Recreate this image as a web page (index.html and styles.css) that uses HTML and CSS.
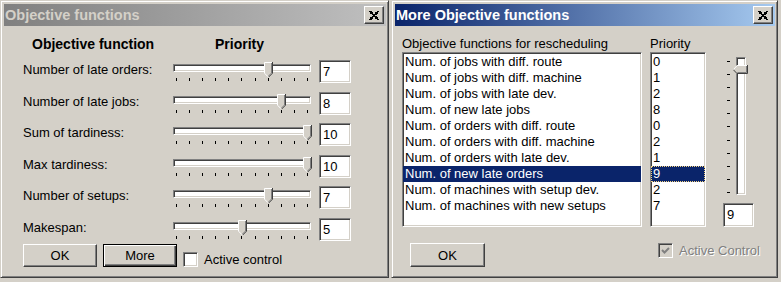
FILE: index.html
```html
<!DOCTYPE html>
<html>
<head>
<meta charset="utf-8">
<link rel="stylesheet" href="styles.css">
</head>
<body>
<div class="desk">
  <div class="window win-left">
    <div class="titlebar inactive">
      <span class="title-text">Objective functions</span>
      <span class="close raised"><svg width="10" height="9" viewBox="0 0 8 7" shape-rendering="crispEdges"><path d="M0 0h2v1H0zM6 0h2v1H6zM1 1h2v1H1zM5 1h2v1H5zM2 2h4v1H2zM3 3h2v1H3zM2 4h4v1H2zM1 5h2v1H1zM5 5h2v1H5zM0 6h2v1H0zM6 6h2v1H6z" fill="#000"/></svg></span>
    </div>
    <div class="obj-body">
      <div class="obj-head">
        <span class="head-fn">Objective function</span>
        <span class="head-prio">Priority</span>
      </div>
      <div class="row">
        <span class="label">Number of late orders:</span>
        <div class="hslider"><div class="track sunken"></div><div class="ticks"><i></i><i></i><i></i><i></i><i></i><i></i><i></i><i></i><i></i><i></i><i></i></div><svg class="hthumb" style="left:91px" width="9" height="15" viewBox="0 0 9 15"><path d="M0 0H9V11L4.5 15.5L0 11Z" fill="#d4d0c8"/><path d="M0.5 11V0.5H8" stroke="#fff" fill="none"/><path d="M8.5 0V11.2L4.5 15.2" stroke="#404040" fill="none"/><path d="M7.5 1V11L4.5 14" stroke="#808080" fill="none"/><path d="M0.5 11.2L4 14.7" stroke="#fff" fill="none"/></svg></div>
        <span class="edit sunken">7</span>
      </div>
      <div class="row">
        <span class="label">Number of late jobs:</span>
        <div class="hslider"><div class="track sunken"></div><div class="ticks"><i></i><i></i><i></i><i></i><i></i><i></i><i></i><i></i><i></i><i></i><i></i></div><svg class="hthumb" style="left:104px" width="9" height="15" viewBox="0 0 9 15"><path d="M0 0H9V11L4.5 15.5L0 11Z" fill="#d4d0c8"/><path d="M0.5 11V0.5H8" stroke="#fff" fill="none"/><path d="M8.5 0V11.2L4.5 15.2" stroke="#404040" fill="none"/><path d="M7.5 1V11L4.5 14" stroke="#808080" fill="none"/><path d="M0.5 11.2L4 14.7" stroke="#fff" fill="none"/></svg></div>
        <span class="edit sunken">8</span>
      </div>
      <div class="row">
        <span class="label">Sum of tardiness:</span>
        <div class="hslider"><div class="track sunken"></div><div class="ticks"><i></i><i></i><i></i><i></i><i></i><i></i><i></i><i></i><i></i><i></i><i></i></div><svg class="hthumb" style="left:130px" width="9" height="15" viewBox="0 0 9 15"><path d="M0 0H9V11L4.5 15.5L0 11Z" fill="#d4d0c8"/><path d="M0.5 11V0.5H8" stroke="#fff" fill="none"/><path d="M8.5 0V11.2L4.5 15.2" stroke="#404040" fill="none"/><path d="M7.5 1V11L4.5 14" stroke="#808080" fill="none"/><path d="M0.5 11.2L4 14.7" stroke="#fff" fill="none"/></svg></div>
        <span class="edit sunken">10</span>
      </div>
      <div class="row">
        <span class="label">Max tardiness:</span>
        <div class="hslider"><div class="track sunken"></div><div class="ticks"><i></i><i></i><i></i><i></i><i></i><i></i><i></i><i></i><i></i><i></i><i></i></div><svg class="hthumb" style="left:130px" width="9" height="15" viewBox="0 0 9 15"><path d="M0 0H9V11L4.5 15.5L0 11Z" fill="#d4d0c8"/><path d="M0.5 11V0.5H8" stroke="#fff" fill="none"/><path d="M8.5 0V11.2L4.5 15.2" stroke="#404040" fill="none"/><path d="M7.5 1V11L4.5 14" stroke="#808080" fill="none"/><path d="M0.5 11.2L4 14.7" stroke="#fff" fill="none"/></svg></div>
        <span class="edit sunken">10</span>
      </div>
      <div class="row">
        <span class="label">Number of setups:</span>
        <div class="hslider"><div class="track sunken"></div><div class="ticks"><i></i><i></i><i></i><i></i><i></i><i></i><i></i><i></i><i></i><i></i><i></i></div><svg class="hthumb" style="left:91px" width="9" height="15" viewBox="0 0 9 15"><path d="M0 0H9V11L4.5 15.5L0 11Z" fill="#d4d0c8"/><path d="M0.5 11V0.5H8" stroke="#fff" fill="none"/><path d="M8.5 0V11.2L4.5 15.2" stroke="#404040" fill="none"/><path d="M7.5 1V11L4.5 14" stroke="#808080" fill="none"/><path d="M0.5 11.2L4 14.7" stroke="#fff" fill="none"/></svg></div>
        <span class="edit sunken">7</span>
      </div>
      <div class="row last">
        <span class="label">Makespan:</span>
        <div class="hslider"><div class="track sunken"></div><div class="ticks"><i></i><i></i><i></i><i></i><i></i><i></i><i></i><i></i><i></i><i></i><i></i></div><svg class="hthumb" style="left:65px" width="9" height="15" viewBox="0 0 9 15"><path d="M0 0H9V11L4.5 15.5L0 11Z" fill="#d4d0c8"/><path d="M0.5 11V0.5H8" stroke="#fff" fill="none"/><path d="M8.5 0V11.2L4.5 15.2" stroke="#404040" fill="none"/><path d="M7.5 1V11L4.5 14" stroke="#808080" fill="none"/><path d="M0.5 11.2L4 14.7" stroke="#fff" fill="none"/></svg></div>
        <span class="edit sunken">5</span>
      </div>
      <div class="btn-row">
        <span class="btn raised">OK</span>
        <span class="btn default">More</span>
        <span class="check sunken white"></span>
        <span class="check-label">Active control</span>
      </div>
    </div>
  </div>

  <div class="window win-right">
    <div class="titlebar active">
      <span class="title-text">More Objective functions</span>
      <span class="close raised"><svg width="10" height="9" viewBox="0 0 8 7" shape-rendering="crispEdges"><path d="M0 0h2v1H0zM6 0h2v1H6zM1 1h2v1H1zM5 1h2v1H5zM2 2h4v1H2zM3 3h2v1H3zM2 4h4v1H2zM1 5h2v1H1zM5 5h2v1H5zM0 6h2v1H0zM6 6h2v1H6z" fill="#000"/></svg></span>
    </div>
    <div class="more-body">
      <div class="more-grid">
        <span class="col-label">Objective functions for rescheduling</span>
        <span class="col-label">Priority</span>
        <span></span>
        <ul class="listbox sunken fn-list">
          <li>Num. of jobs with diff. route</li>
          <li>Num. of jobs with diff. machine</li>
          <li>Num. of jobs with late dev.</li>
          <li>Num. of new late jobs</li>
          <li>Num. of orders with diff. route</li>
          <li>Num. of orders with diff. machine</li>
          <li>Num. of orders with late dev.</li>
          <li class="sel">Num. of new late orders</li>
          <li>Num. of machines with setup dev.</li>
          <li>Num. of machines with new setups</li>
        </ul>
        <ul class="listbox sunken prio-list">
          <li>0</li><li>1</li><li>2</li><li>8</li><li>0</li><li>2</li><li>1</li><li class="sel focus">9</li><li>2</li><li>7</li>
        </ul>
        <div class="vcol">
          <div class="vslider">
            <div class="vticks"><i></i><i></i><i></i><i></i><i></i><i></i><i></i><i></i><i></i><i></i><i></i></div>
            <div class="vtrack sunken"></div>
            <svg class="vthumb" style="top:13px" width="15" height="9" viewBox="0 0 15 9"><path d="M4 0H15V9H4L0 4.5Z" fill="#d4d0c8"/><path d="M0.3 4.7L4.2 0.5H14" stroke="#fff" fill="none"/><path d="M14.5 0V8.5H4L0.3 4.7" stroke="#404040" fill="none"/><path d="M13.5 1V7.5H4.4" stroke="#808080" fill="none"/></svg>
          </div>
          <span class="edit sunken vedit">9</span>
        </div>
      </div>
      <div class="more-bottom">
        <span class="btn raised ok-right">OK</span>
        <span class="check sunken disabled"><svg width="11" height="11" viewBox="0 0 11 11"><path d="M2 5L4.5 7.5L9 3" stroke="#808080" stroke-width="2" fill="none"/></svg></span>
        <span class="check-label dim">Active Control</span>
      </div>
    </div>
  </div>
</div>
</body>
</html>
```

FILE: styles.css
```css
* { box-sizing: border-box; }
html, body { margin: 0; padding: 0; }
body {
  background: #d4d0c8;
  font-family: "Liberation Sans", Arial, sans-serif;
  font-size: 13px;
  color: #000;
  width: 781px;
  height: 282px;
  overflow: hidden;
}
.desk { display: flex; align-items: flex-start; gap: 2px; }

.window {
  height: 278px;
  background: #d4d0c8;
  border: 1px solid;
  border-color: #d4d0c8 #404040 #404040 #d4d0c8;
  box-shadow: inset 1px 1px #fff, inset -1px -1px #808080;
  padding: 3px 2px 3px 3px;
}
.win-left { width: 389px; }
.win-right { width: 387px; }

.titlebar {
  height: 22px;
  display: flex;
  align-items: center;
  justify-content: space-between;
  padding: 0 2px 0 1px;
}
.titlebar.inactive { background: linear-gradient(to right, #808080, #c0c0c0); color: #d4d0c8; }
.titlebar.active { background: linear-gradient(to right, #0a246a, #a6caf0); color: #fff; }
.title-text {
  font-family: "Liberation Sans", Arial, sans-serif;
  font-weight: bold;
  font-size: 14.5px;
  line-height: 18px;
}
.close {
  width: 20px;
  height: 18px;
  background: #d4d0c8;
  display: flex;
  align-items: center;
  justify-content: center;
}
.raised {
  border: 1px solid;
  border-color: #fff #404040 #404040 #fff;
  box-shadow: inset -1px -1px #808080;
  background: #d4d0c8;
}
.sunken {
  border: 1px solid;
  border-color: #808080 #fff #fff #808080;
  box-shadow: inset 1px 1px #404040, inset -1px -1px #d4d0c8;
  background: #fff;
}

/* left dialog */
.obj-body { padding: 10px 0 0 19px; }
.obj-head { display: flex; height: 22px; line-height: 16px; font-weight: bold; font-size: 14px; }
.head-fn { width: 150px; padding-left: 9px; }
.head-prio { padding-left: 42px; }
.row { display: flex; align-items: flex-start; height: 31.6px; }
.row.last { height: 28px; }
.label { width: 150px; padding-top: 4px; line-height: 16px; white-space: nowrap; }
.hslider { position: relative; width: 138px; height: 24px; margin-right: 8px; }
.track { position: absolute; left: 0; top: 6px; width: 138px; height: 8px; }
.ticks {
  position: absolute; left: 3px; top: 20px; width: 132px; height: 3px;
  display: flex; justify-content: space-between;
}
.ticks i { display: block; width: 1px; height: 3px; background: #000; }
.hthumb { position: absolute; top: 4px; }
.edit {
  width: 32px; height: 23px; margin-top: 2px;
  padding: 3px 0 0 3px;
  line-height: 16px;
}

.btn-row { display: flex; align-items: center; height: 23px; }
.btn {
  width: 74px; height: 23px;
  display: flex; align-items: center; justify-content: center;
  margin-right: 6px;
}
.btn.default {
  border: 1px solid #000;
  box-shadow: inset 1px 1px #fff, inset -1px -1px #404040, inset -2px -2px #808080;
  background: #d4d0c8;
}
.check { width: 15px; height: 15px; display: flex; align-items: center; justify-content: center; }
.btn-row .check { margin-top: 9px; }
.check.disabled { background: #d4d0c8; }
.check-label { margin-left: 6px; line-height: 16px; }
.btn-row .check-label { margin-top: 9px; }
.check-label.dim { color: #808080; text-shadow: 1px 1px #fff; }

/* right dialog */
.more-body { padding: 10px 0 0 7px; }
.more-grid {
  display: grid;
  grid-template-columns: 240px 56px 32px;
  grid-template-rows: 16px 175px;
  column-gap: 8px;
}
.more-grid > :nth-child(3n) { margin-left: 9px; }
.col-label { line-height: 16px; white-space: nowrap; }
.listbox { margin: 0; padding: 1px 0 0 0; list-style: none; overflow: hidden; }
.listbox li { height: 16px; line-height: 16px; padding-left: 2px; white-space: nowrap; }
.listbox li.sel { background: #0a246a; color: #fff; }
.listbox li.focus { outline: 1px dotted #f0d080; outline-offset: -1px; }
.vcol { display: flex; flex-direction: column; }
.vslider { position: relative; width: 32px; height: 143px; padding-top: 5px; }
.vticks {
  position: absolute; left: 4px; top: 9px; width: 3px; height: 132px;
  display: flex; flex-direction: column; justify-content: space-between;
}
.vticks i { display: block; width: 3px; height: 1px; background: #000; }
.vtrack { position: absolute; left: 13px; top: 5px; width: 10px; height: 138px; }
.vthumb { position: absolute; left: 10px; }
.vedit { margin-top: 8px; width: 31px; height: 24px; }
.more-bottom { display: flex; align-items: flex-start; margin-top: 16px; }
.ok-right { width: 75px; height: 24px; margin-left: 8px; margin-right: 173px; }
```
